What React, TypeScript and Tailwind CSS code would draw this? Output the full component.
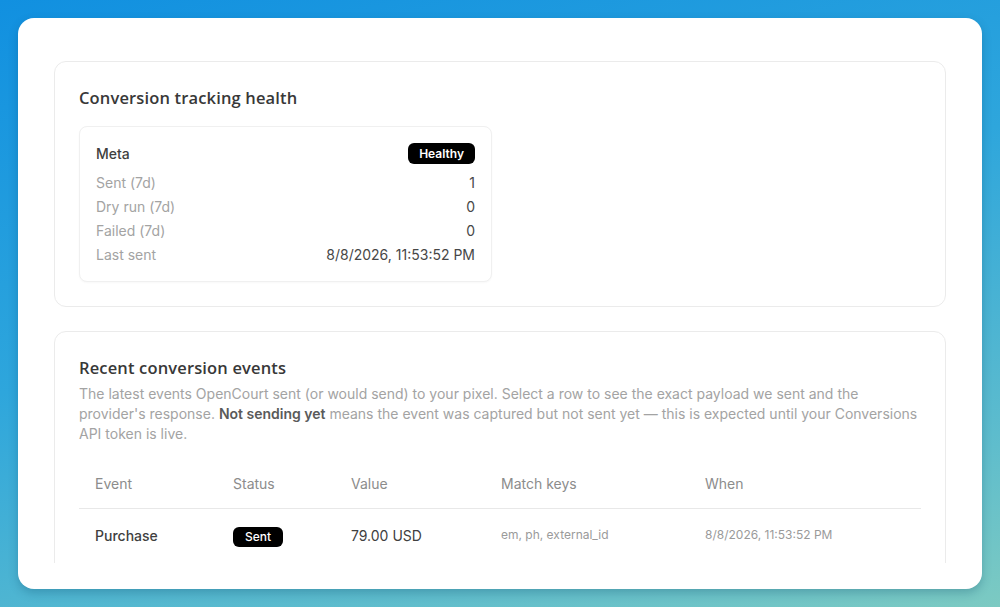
import React from "react";

const rows = [
  { label: "Sent (7d)", value: "1" },
  { label: "Dry run (7d)", value: "0" },
  { label: "Failed (7d)", value: "0" },
  { label: "Last sent", value: "8/8/2026, 11:53:52 PM" },
];

const headingFont = { fontFamily: "'Open Sans', Inter, sans-serif", letterSpacing: "0.15px" };

export default function App() {
  return (
    <div
      className="h-[607px] w-full p-[18px] bg-[linear-gradient(165deg,#1190e0_0%,#2ea6dc_45%,#5dbccd_80%,#7ccac2_100%)]"
      style={{ fontFamily: "Inter, 'Liberation Sans', sans-serif" }}
    >
      <div className="flex h-full flex-col rounded-2xl bg-white px-9 pt-[43px] pb-[26px] shadow-[0_4px_10px_rgba(0,60,90,0.25)]">
        <div className="flex flex-1 flex-col gap-6 overflow-hidden">
          <section className="rounded-xl border border-[#ebebeb] bg-white p-6">
            <h2 className="mb-4 text-[16.5px] leading-6 font-semibold text-[#383838]" style={headingFont}>
              Conversion tracking health
            </h2>
            <div className="grid grid-cols-2 gap-4">
              <div className="rounded-lg border border-[#f0f0f0] bg-white p-4 shadow-[0_1px_2px_rgba(0,0,0,0.03)]">
                <div className="mb-[9px] flex items-center justify-between">
                  <span className="text-[14px] font-medium text-[#3f3f3f]">Meta</span>
                  <span className="rounded-md bg-black px-[11px] py-[2px] text-[12px] leading-[17px] font-semibold text-white">
                    Healthy
                  </span>
                </div>
                <div className="flex flex-col gap-1">
                  {rows.map((r) => (
                    <div key={r.label} className="flex items-center justify-between text-[14px] leading-5">
                      <span className="text-[#a3a3a3]">{r.label}</span>
                      <span className="text-[#474747]">{r.value}</span>
                    </div>
                  ))}
                </div>
              </div>
              <div />
            </div>
          </section>

          <section className="shrink-0 rounded-xl border border-[#ebebeb] bg-white p-6">
            <h2 className="text-[16.5px] leading-6 font-semibold text-[#383838]" style={headingFont}>
              Recent conversion events
            </h2>
            <p className="mt-1 text-[14px] leading-5 text-[#a3a3a3]">
              The latest events OpenCourt sent (or would send) to your pixel. Select a row to see the exact payload we sent and the
              provider's response. <span className="font-semibold text-[#5a5a5a]">Not sending yet</span> means the event was captured
              but not sent yet — this is expected until your Conversions API token is live.
            </p>
            <table className="mt-4 w-full table-fixed border-collapse text-left">
              <colgroup>
                <col className="w-[138px]" />
                <col className="w-[118px]" />
                <col className="w-[150px]" />
                <col className="w-[204px]" />
                <col />
              </colgroup>
              <thead>
                <tr className="border-b border-[#e8e8e8]">
                  <th className="h-12 px-4 text-[14px] font-normal text-[#8c8c8c]">Event</th>
                  <th className="h-12 px-4 text-[14px] font-normal text-[#8c8c8c]">Status</th>
                  <th className="h-12 px-4 text-[14px] font-normal text-[#8c8c8c]">Value</th>
                  <th className="h-12 px-4 text-[14px] font-normal text-[#8c8c8c]">Match keys</th>
                  <th className="h-12 px-4 text-[14px] font-normal text-[#8c8c8c]">When</th>
                </tr>
              </thead>
              <tbody>
                <tr>
                  <td className="h-[54px] px-4 text-[14px] font-medium text-[#3f3f3f]">Purchase</td>
                  <td className="h-[54px] px-4">
                    <span className="inline-block rounded-md bg-black px-3 py-[2px] text-[12px] leading-4 font-medium text-white">Sent</span>
                  </td>
                  <td className="h-[54px] px-4 text-[14px] text-[#404040]">79.00 USD</td>
                  <td className="h-[54px] px-4 text-[12px] text-[#9a9a9a]">em, ph, external_id</td>
                  <td className="h-[54px] px-4 text-[12px] text-[#9a9a9a]">8/8/2026, 11:53:52 PM</td>
                </tr>
              </tbody>
            </table>
          </section>
        </div>
      </div>
    </div>
  );
}
